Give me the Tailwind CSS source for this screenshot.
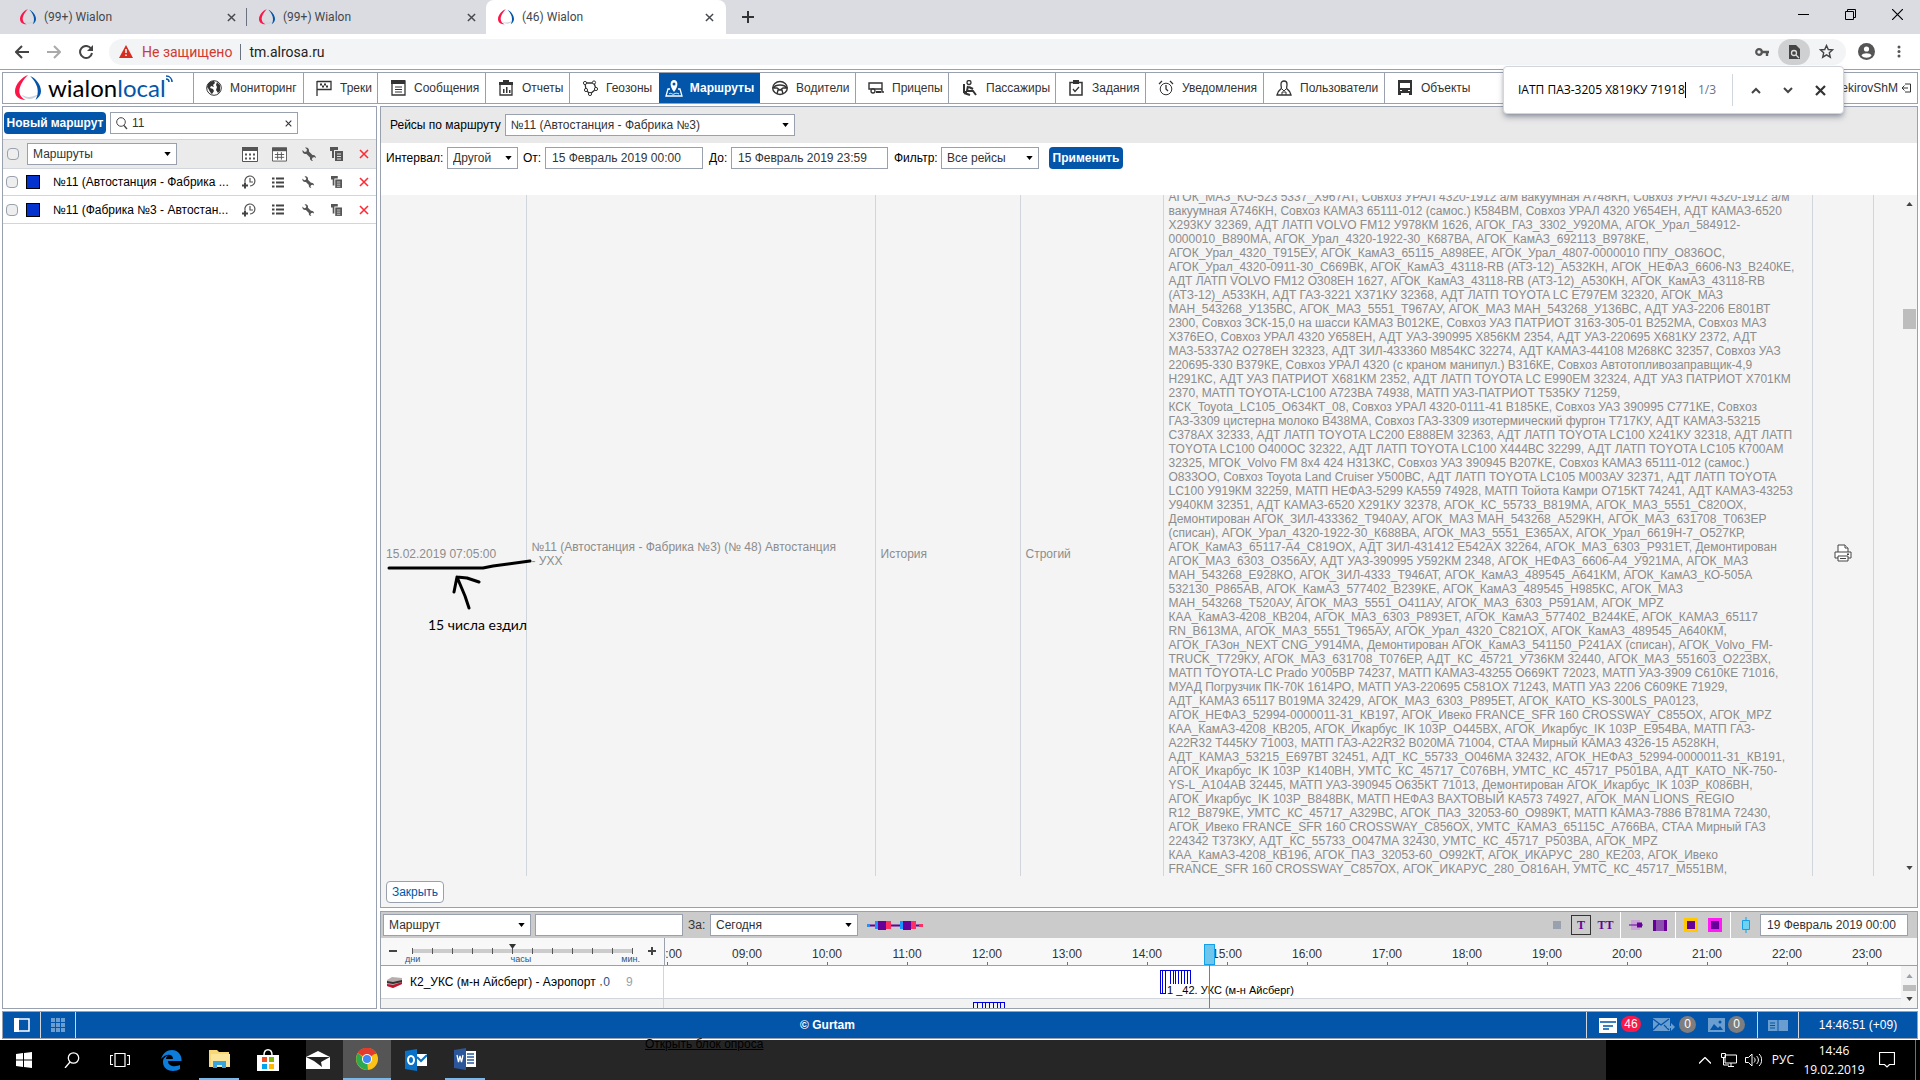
<!DOCTYPE html>
<html lang="ru">
<head>
<meta charset="utf-8">
<title>(46) Wialon</title>
<script src="https://cdn.jsdelivr.net/npm/@tailwindcss/browser@4"></script>
</head>
<body class="h-screen overflow-hidden flex flex-col bg-white font-['Liberation_Sans',Arial,sans-serif] text-xs text-[#333]">
<svg class="hidden">
  <symbol id="logo" viewBox="0 0 24 24"><path d="M12 0C6 2 0 9 0 15c0 5 4 8 10 8-3-1-6-4-6-8C4 10 8 4 12 0z" fill="#fc1648"/><path d="M14 1c5 2 10 8 10 14 0 3-2 6-5 8 1-2 2-5 2-8 0-5-3-10-7-14z" fill="#0255a9"/><path d="M6 18c4 3 9 3 15 0-3 5-11 6-15 0z" fill="#c9d3de"/></symbol>
  <symbol id="caret" viewBox="0 0 8 5"><path d="M0 0h8L4 5z" fill="currentColor"/></symbol>
  <symbol id="xs" viewBox="0 0 10 10"><path d="M1 1l8 8M9 1L1 9" stroke="currentColor" stroke-width="1.6" fill="none"/></symbol>
  <symbol id="wrench" viewBox="0 0 14 14"><path d="M3 .5L5 2.500 4.500 4.500 2.500 5 .5 3C0 6 2 7.500 4.500 7L8 10.500C7.500 12.500 9 14 11 14L9.800 12.500l.7-1.700 1.700-.7L14 11c0-2-1.500-3.500-3.500-3L7 4.500C7.500 2 6 0 3 .5z" fill="#555"/></symbol>
  <symbol id="copy" viewBox="0 0 13 14"><path d="M0 0h8v3H4v8H2V4H0z" fill="#555"/><path d="M5 4h8v10H5z" fill="#555"/><path d="M7 7h4M7 9.500h4M7 12h4" stroke="#ddd"/></symbol>
  <symbol id="list" viewBox="0 0 12 11"><path d="M0 1.500h2.500M4 1.500h8M0 5.500h2.500M4 5.500h8M0 9.500h2.500M4 9.500h8" stroke="#444" stroke-width="2"/></symbol>
  <symbol id="addtime" viewBox="0 0 14 14"><path d="M3 7a5 5 0 1 1 5 4M8 3v4h3" fill="none" stroke="#555" stroke-width="1.200"/><path d="M0 10.500h6M3 7.500v6" stroke="#444" stroke-width="2"/></symbol>
</svg>

<!-- browser tabs -->
<header class="h-[34px] shrink-0 bg-[#dadce1] flex text-[#44474c] font-[Roboto,sans-serif]">
  <div class="w-[247px] my-2 flex items-center pl-5 pr-[10px] gap-2 border-r border-gray-500"><svg class="size-4"><use href="#logo"/></svg><span class="flex-1">(99+) Wialon</span><button aria-label="Закрыть вкладку"><svg class="size-[9px]"><use href="#xs"/></svg></button></div>
  <div class="w-[239px] flex items-center pl-3 pr-[10px] gap-2"><svg class="size-4"><use href="#logo"/></svg><span class="flex-1">(99+) Wialon</span><button aria-label="Закрыть вкладку"><svg class="size-[9px]"><use href="#xs"/></svg></button></div>
  <div class="w-[240px] flex items-center px-3 gap-2 bg-white rounded-t-lg"><svg class="size-4"><use href="#logo"/></svg><span class="flex-1">(46) Wialon</span><button aria-label="Закрыть вкладку"><svg class="size-[9px]"><use href="#xs"/></svg></button></div>
  <button class="ml-4 self-center" aria-label="Новая вкладка"><svg class="size-3" viewBox="0 0 12 12"><path d="M6 0v12M0 6h12" stroke="#333" stroke-width="2"/></svg></button>
  <div class="ml-auto flex items-start gap-[36px] pt-[9px] pr-[17px]">
    <button aria-label="Свернуть"><svg class="size-[11px]" viewBox="0 0 11 11"><path d="M0 5.500h11" stroke="#000"/></svg></button>
    <button aria-label="Окно"><svg class="size-[11px]" viewBox="0 0 11 11"><path d="M.5 2.500h8v8h-8zM2.500 2.500v-2h8v8h-2" stroke="#000" fill="none"/></svg></button>
    <button aria-label="Закрыть"><svg class="size-[11px]" viewBox="0 0 11 11"><path d="M0 0l11 11M11 0L0 11" stroke="#000" stroke-width="1.200"/></svg></button>
  </div>
</header>

<!-- address bar -->
<div class="h-9 shrink-0 bg-white flex items-center pl-[15px] pr-4 font-[Roboto,sans-serif] border-b border-gray-400">
  <button aria-label="Назад"><svg class="size-[14px]" viewBox="0 0 14 14"><path d="M14 7H1M7 1L1 7l6 6" stroke="#444" stroke-width="2" fill="none"/></svg></button>
  <button class="ml-[18px]" aria-label="Вперёд"><svg class="size-[14px]" viewBox="0 0 14 14"><path d="M0 7h13M7 1l6 6-6 6" stroke="#aaa" stroke-width="2" fill="none"/></svg></button>
  <button class="ml-[18px]" aria-label="Обновить"><svg class="size-[14px]" viewBox="0 0 14 14"><path d="M12 3.500A6 6 0 1 0 13 8" stroke="#444" stroke-width="2" fill="none"/><path d="M14 0v6H8z" fill="#444"/></svg></button>
  <div class="ml-4 flex-1 h-[26px] rounded-full bg-[#f3f4f5] flex items-center pl-[10px] pr-3 text-sm">
    <svg class="w-[14px] h-[13px]" viewBox="0 0 14 13"><path d="M7 0l7 13H0z" fill="#d62d20"/><path d="M7 4v4M7 9.500v1.500" stroke="#fff" stroke-width="1.500"/></svg>
    <span class="ml-[9px] text-[#d03a30]">Не защищено</span><span class="mx-2 h-4 w-px bg-gray-500"></span><span class="text-[#222]">tm.alrosa.ru</span>
    <svg class="ml-auto w-[14px] h-2" viewBox="0 0 14 8"><circle cx="4" cy="4" r="2.800" fill="none" stroke="#555" stroke-width="2.200"/><path d="M7 4h7M12 4v4" stroke="#555" stroke-width="2.400"/></svg>
    <span class="ml-[9px] w-8 h-[26px] rounded-full bg-[#cfd0d1] flex items-center justify-center"><svg class="w-3 h-[14px]" viewBox="0 0 12 14"><path d="M1 0h7l4 4v10H1z" fill="#444"/><circle cx="6" cy="8" r="2.500" fill="none" stroke="#ddd" stroke-width="1.300"/><path d="M8 10l3 3" stroke="#ddd" stroke-width="1.300"/></svg></span>
    <svg class="ml-[9px] size-[15px]" viewBox="0 0 15 15"><path d="M7.500 1.500l1.800 4 4.200.4-3.200 2.900 1 4.400-3.800-2.400-3.800 2.400 1-4.400L1.500 5.900l4.200-.4z" fill="none" stroke="#444" stroke-width="1.400"/></svg>
  </div>
  <svg class="ml-3 size-[17px]" viewBox="0 0 17 17"><circle cx="8.500" cy="8.500" r="8.500" fill="#555"/><circle cx="8.500" cy="6" r="2.600" fill="#fff"/><path d="M3.500 12.500c1-3 9-3 10 0-2 3-8 3-10 0z" fill="#fff"/></svg>
  <svg class="ml-[22px] mr-[3px] w-1 h-[13px]" viewBox="0 0 4 13"><g fill="#555"><circle cx="2" cy="2" r="1.500"/><circle cx="2" cy="6.500" r="1.500"/><circle cx="2" cy="11" r="1.500"/></g></svg>
</div>

<!-- application menu -->
<nav class="mt-[2px] mx-[2px] h-8 shrink-0 border border-gray-400 bg-white flex relative">
  <a href="#" class="w-[191px] flex items-center pl-3 border-r border-gray-400 text-black"><svg class="size-[26px]"><use href="#logo"/></svg><span class="ml-[7px] text-2xl leading-7 font-[Lato,sans-serif]">wialon<span class="text-[#0255a9]">local</span></span><svg class="w-[7px] h-2 mb-[18px]" viewBox="0 0 7 8"><path d="M0 1c4 0 6 3 6 6M0 4c2 0 3 1 3 3" stroke="#0255a9" stroke-width="1.500" fill="none"/></svg></a>
  <a href="#" class="w-[110px] flex items-center pl-3 gap-2 border-r border-gray-400"><svg class="size-4" viewBox="0 0 16 16"><circle cx="8" cy="8" r="7.300" fill="none" stroke="#333"/><path d="M2 4c2-3 5-3 6-3l1 2-2 2 1 2-3-1-1 2 3 1 1 2-2 3C4 13 3 9 1 7zM11 2l3 3v6l-2 2-2-3 1-3-1-2z" fill="#333"/></svg>Мониторинг</a>
  <a href="#" class="w-[74px] flex items-center pl-3 gap-2 border-r border-gray-400"><svg class="size-4" viewBox="0 0 16 16"><path d="M1 1v15M1 1.500h14v8H1" fill="none" stroke="#333" stroke-width="1.300"/><path d="M4 3.500h2v2h2v-2h2v2h2v2h-2v-2H8v2H6v-2H4z" fill="#333"/></svg>Треки</a>
  <a href="#" class="w-[108px] flex items-center pl-3 gap-2 border-r border-gray-400"><svg class="size-4" viewBox="0 0 16 16"><path d="M2 1h13v14H2z" fill="none" stroke="#333" stroke-width="1.300"/><path d="M1 0h14v4H1z" fill="#333"/><path d="M5 7h7M5 9.500h7M5 12h7" stroke="#333"/></svg>Сообщения</a>
  <a href="#" class="w-[84px] flex items-center pl-3 gap-2 border-r border-gray-400"><svg class="size-4" viewBox="0 0 16 16"><path d="M2 3h12v12H2z" fill="none" stroke="#333" stroke-width="1.300"/><path d="M1 2h4V0h6v2h4v3H1zM5 9h1.500v4H5zM8 7h1.500v6H8zM11 10h1.500v3H11z" fill="#333"/></svg>Отчеты</a>
  <a href="#" class="w-[89px] flex items-center pl-3 gap-2"><svg class="size-4" viewBox="0 0 16 16"><path d="M3 3h9l2 6-6 5-4-4z" fill="none" stroke="#333" stroke-width="1.300"/><g fill="#fff" stroke="#333"><circle cx="3" cy="3" r="1.600"/><circle cx="12" cy="2.500" r="1.600"/><circle cx="14" cy="9" r="1.600"/><circle cx="8" cy="14" r="1.600"/><circle cx="4" cy="10" r="1.600"/></g></svg>Геозоны</a>
  <a href="#" class="w-[101px] flex items-center justify-center gap-[7px] bg-[#0255a9] text-white font-bold"><svg class="w-[18px] h-[17px]" viewBox="0 0 18 17"><path d="M5 9H3L1 16h16l-2-7h-2" fill="none" stroke="#fff" stroke-width="1.300"/><path d="M9 12C4 6 5 0 9 0s5 6 0 12z" fill="#fff"/><circle cx="9" cy="4" r="1.500" fill="#0255a9"/><path d="M4 14c2-2 3 1 5 0s3-1 5 0" stroke="#fff" fill="none"/></svg>Маршруты</a>
  <a href="#" class="w-[96px] flex items-center pl-3 gap-2 border-r border-gray-400"><svg class="size-4" viewBox="0 0 16 16"><ellipse cx="8" cy="8" rx="7.300" ry="6.500" fill="none" stroke="#333" stroke-width="1.400"/><path d="M1 8c3-4 11-4 14 0M1 8h4l3 2 3-2h4M5 14l1-4h4l1 4" fill="none" stroke="#333" stroke-width="1.400"/></svg>Водители</a>
  <a href="#" class="w-[93px] flex items-center pl-3 gap-2 border-r border-gray-400"><svg class="size-4" viewBox="0 0 16 16"><path d="M1 3h13v6H1zM14 9v3h2" fill="none" stroke="#333" stroke-width="1.400"/><circle cx="5" cy="11" r="2" fill="#fff" stroke="#333" stroke-width="1.300"/><path d="M8 11h5v2H8z" fill="#333"/></svg>Прицепы</a>
  <a href="#" class="w-[107px] flex items-center pl-[13px] gap-2 border-r border-gray-400"><svg class="size-4" viewBox="0 0 16 16"><circle cx="7" cy="2.500" r="2" fill="none" stroke="#333" stroke-width="1.300"/><path d="M2 4v8h3M6 6l-1 5h6l3 4M7 7l4 2M2 13l6 2" fill="none" stroke="#333" stroke-width="2"/></svg>Пассажиры</a>
  <a href="#" class="w-[90px] flex items-center pl-3 gap-2 border-r border-gray-400"><svg class="size-4" viewBox="0 0 16 16"><path d="M2 2.500h12v12.500H2z" fill="none" stroke="#333" stroke-width="1.500"/><path d="M5 0h6v4H5z" fill="#333"/><path d="M5 9l2 2.500L11 7" fill="none" stroke="#333" stroke-width="1.300"/></svg>Задания</a>
  <a href="#" class="w-[118px] flex items-center pl-3 gap-2 border-r border-gray-400"><svg class="size-4" viewBox="0 0 16 16"><circle cx="8" cy="9" r="5.800" fill="none" stroke="#333"/><path d="M8 5v4l2 2M1 4l3-3M15 4l-3-3" fill="none" stroke="#333" stroke-width="1.300"/></svg>Уведомления</a>
  <a href="#" class="w-[121px] flex items-center pl-3 gap-2 border-r border-gray-400"><svg class="size-4" viewBox="0 0 16 16"><path d="M5 4c0-4 6-4 6 0s-1 4 0 5 3 1 4 6H1c1-5 3-5 4-6s0-1 0-5z" fill="none" stroke="#333" stroke-width="1.300"/><path d="M6 9l2 2 2-2M6 15v-3h4v3" stroke="#333" fill="none"/></svg>Пользователи</a>
  <a href="#" class="flex items-center pl-3 gap-2"><svg class="w-4 h-4" viewBox="0 0 16 16"><path d="M1 0h14v15h-3v-2H4v2H1z" fill="#333"/><path d="M3 3h10v5H3z" fill="#fff"/><path d="M3 10h2v1H3zM11 10h2v1h-2z" fill="#fff"/></svg>Объекты</a>
  <a href="#" class="ml-auto flex items-center gap-1 pr-[6px]">ekirovShM<svg class="w-[9px] h-[10px]" viewBox="0 0 9 10"><path d="M3 1h5.500v8H3M6 5H0M2.500 2.500L0 5l2.500 2.500" fill="none" stroke="#333"/></svg></a>
</nav>

<!-- find in page -->
<form class="absolute right-[76px] top-[66px] w-[341px] h-12 bg-white rounded-sm border border-gray-300 shadow-md shadow-gray-500/60 flex items-center font-['Open_Sans',sans-serif]">
  <input aria-label="Найти на странице" class="ml-[14px] w-[167px] outline-none text-black" value="IАТП ПАЗ-3205 Х819КУ 71918"><span class="w-px h-4 bg-black"></span>
  <span class="ml-3 text-gray-500">1/3</span><span class="ml-4 h-8 w-px bg-gray-300"></span>
  <button type="button" aria-label="Предыдущее" class="ml-[18px]"><svg class="w-[10px] h-[7px]" viewBox="0 0 10 7"><path d="M1 6l4-4 4 4" stroke="#444" stroke-width="2" fill="none"/></svg></button>
  <button type="button" aria-label="Следующее" class="ml-[22px]"><svg class="w-[10px] h-[7px]" viewBox="0 0 10 7"><path d="M1 1l4 4 4-4" stroke="#444" stroke-width="2" fill="none"/></svg></button>
  <button type="button" aria-label="Закрыть поиск" class="ml-[22px]"><svg class="size-[11px]" viewBox="0 0 11 11"><path d="M1 1l9 9M10 1l-9 9" stroke="#333" stroke-width="2.200"/></svg></button>
</form>

<div class="flex-1 min-h-0 flex gap-[3px] px-[2px] pt-[2px]">
  <!-- routes list -->
  <aside class="w-[375px] shrink-0 border border-gray-400 bg-white flex flex-col">
    <div class="h-8 flex items-center pl-px gap-1">
      <button class="w-[102px] h-[22px] bg-[#0255a9] text-white font-bold rounded">Новый маршрут</button>
      <div class="w-[188px] h-[22px] border border-gray-400 flex items-center px-1 gap-1">
        <svg class="size-[13px]" viewBox="0 0 13 13"><circle cx="6" cy="5" r="4.300" fill="none" stroke="#444"/><path d="M9 8.500L12 12" stroke="#444" stroke-width="1.300"/></svg>
        <input aria-label="Поиск маршрута" class="flex-1 min-w-0 outline-none" value="11"><button aria-label="Очистить"><svg class="size-[7px] mr-px"><use href="#xs" /></svg></button>
      </div>
    </div>
    <div class="h-[30px] border-y border-gray-300 bg-[#ebebeb] flex items-center pl-1 pr-[7px]">
      <input type="checkbox" aria-label="Выбрать все" class="appearance-none size-3 border border-gray-400 rounded-sm bg-[#eee]">
      <div class="relative ml-2"><select aria-label="Показать" class="appearance-none w-[150px] h-[22px] pl-[5px] bg-white border border-gray-400"><option>Маршруты</option></select><svg class="absolute right-[6px] top-[9px] w-[7px] h-1 text-black"><use href="#caret"/></svg></div>
      <button class="ml-auto" aria-label="Расписание"><svg class="w-4 h-[15px]" viewBox="0 0 16 15"><path d="M.5.5h15v14H.5z" fill="#fff" stroke="#555"/><path d="M0 0h16v4H0z" fill="#555"/><path d="M3 7.500h10M3 11.500h10" stroke="#555" stroke-width="2" stroke-dasharray="2 2"/></svg></button>
      <button class="ml-[14px]" aria-label="Таблица"><svg class="w-[15px] h-[15px]" viewBox="0 0 16 15"><path d="M.5.5h15v14H.5z" fill="#fff" stroke="#555"/><path d="M0 0h16v4H0z" fill="#555"/><path d="M3 7.500h10M3 10.500h10M6 5v8M10 5v8" stroke="#555"/></svg></button>
      <button class="ml-[15px]" aria-label="Свойства"><svg class="size-[14px]"><use href="#wrench"/></svg></button>
      <button class="ml-[14px]" aria-label="Копировать"><svg class="w-[13px] h-[14px]"><use href="#copy"/></svg></button>
      <button class="ml-4 text-red-500" aria-label="Удалить"><svg class="size-[10px]"><use href="#xs"/></svg></button>
    </div>
    <div class="h-[27px] border-b border-gray-300 flex items-center pl-[3px] pr-[7px] text-black">
      <input type="checkbox" aria-label="№11 (Автостанция - Фабрика №3)" class="appearance-none size-3 border border-gray-400 rounded-sm bg-[#eee]"><span class="ml-2 size-[14px] bg-[#0432ce] border border-black"></span><span class="ml-[13px] w-[178px] whitespace-nowrap">№11 (Автостанция - Фабрика ...</span>
      <button class="ml-auto" aria-label="Добавить рейс"><svg class="size-[14px]"><use href="#addtime"/></svg></button><button class="ml-4" aria-label="Рейсы"><svg class="w-3 h-[11px]"><use href="#list"/></svg></button><button class="ml-[18px]" aria-label="Свойства"><svg class="size-3"><use href="#wrench"/></svg></button><button class="ml-[17px]" aria-label="Копировать"><svg class="w-[11px] h-3"><use href="#copy"/></svg></button><button class="ml-[17px] text-red-500" aria-label="Удалить"><svg class="size-[10px]"><use href="#xs"/></svg></button>
    </div>
    <div class="h-[28px] border-b border-gray-300 flex items-center pl-[3px] pr-[7px] text-black">
      <input type="checkbox" aria-label="№11 (Фабрика №3 - Автостанция)" class="appearance-none size-3 border border-gray-400 rounded-sm bg-[#eee]"><span class="ml-2 size-[14px] bg-[#0432ce] border border-black"></span><span class="ml-[13px] w-[178px] whitespace-nowrap">№11 (Фабрика №3 - Автостан...</span>
      <button class="ml-auto" aria-label="Добавить рейс"><svg class="size-[14px]"><use href="#addtime"/></svg></button><button class="ml-4" aria-label="Рейсы"><svg class="w-3 h-[11px]"><use href="#list"/></svg></button><button class="ml-[18px]" aria-label="Свойства"><svg class="size-3"><use href="#wrench"/></svg></button><button class="ml-[17px]" aria-label="Копировать"><svg class="w-[11px] h-3"><use href="#copy"/></svg></button><button class="ml-[17px] text-red-500" aria-label="Удалить"><svg class="size-[10px]"><use href="#xs"/></svg></button>
    </div>
  </aside>

  <div class="flex-1 min-w-0 flex flex-col gap-[3px]">
    <!-- rides of the route -->
    <main class="flex-1 min-h-0 border border-gray-400 bg-white flex flex-col">
      <div class="h-9 shrink-0 bg-[#e9e9e9] flex items-center pl-[9px] gap-1 text-black">
        <label for="route">Рейсы по маршруту</label>
        <div class="relative"><select id="route" class="appearance-none w-[290px] h-[22px] pl-[5px] bg-white border border-gray-400 text-[#333]"><option>№11 (Автостанция - Фабрика №3)</option></select><svg class="absolute right-[6px] top-[9px] w-[7px] h-1"><use href="#caret"/></svg></div>
      </div>
      <div class="h-[52px] shrink-0 flex items-start pt-1 pl-[5px] text-black">
        <div class="flex items-center h-[22px]">
        <label for="interval" class="w-[61px]">Интервал:</label>
        <div class="relative"><select id="interval" class="appearance-none w-[71px] h-[22px] pl-[5px] bg-white border border-gray-400 text-[#333]"><option>Другой</option></select><svg class="absolute right-[6px] top-[9px] w-[7px] h-1"><use href="#caret"/></svg></div>
        <label for="from" class="ml-[5px] w-[22px]">От:</label><input id="from" class="w-[158px] h-[22px] px-[6px] border border-gray-400 text-[#333]" value="15 Февраль 2019 00:00">
        <label for="to" class="ml-[6px] w-[22px]">До:</label><input id="to" class="w-[157px] h-[22px] px-[6px] border border-gray-400 text-[#333]" value="15 Февраль 2019 23:59">
        <label for="filter" class="ml-[6px] w-[47px]">Фильтр:</label>
        <div class="relative"><select id="filter" class="appearance-none w-[98px] h-[22px] pl-[5px] bg-white border border-gray-400 text-[#333]"><option>Все рейсы</option></select><svg class="absolute right-[6px] top-[9px] w-[7px] h-1"><use href="#caret"/></svg></div>
        <button class="ml-[10px] w-[74px] h-[22px] bg-[#0255a9] text-white font-bold rounded">Применить</button>
        </div>
      </div>
      <div class="relative flex-1 min-h-0 flex bg-[#f4f4f4]">
        <div class="flex-1 min-w-0 overflow-hidden">
        <table class="-mt-[5px] w-full table-fixed text-[#8c8c8c] leading-[14px] text-left">
          <colgroup><col class="w-[145px]"><col class="w-[349px]"><col class="w-[145px]"><col class="w-[143px]"><col><col class="w-[61px]"><col class="w-[28px]"></colgroup>
          <tbody><tr>
            <td class="border-r border-gray-300 pl-[5px]">15.02.2019 07:05:00</td>
            <td class="border-r border-gray-300 pl-[5px] whitespace-nowrap">№11 (Автостанция - Фабрика №3) (№ 48) Автостанция<br>- УХХ</td>
            <td class="border-r border-gray-300 pl-[5px]">История</td>
            <td class="border-r border-gray-300 pl-[5px]">Строгий</td>
            <td class="border-r border-gray-300 pl-[5px] pb-[42px] whitespace-nowrap">АГОК_МАЗ_КО-523 5337_Х967АТ, Совхоз УРАЛ 4320-1912 а/м вакуумная А748КН, Совхоз УРАЛ 4320-1912 а/м<br>вакуумная А746КН, Совхоз КАМАЗ 65111-012 (самос.) К584ВМ, Совхоз УРАЛ 4320 У654ЕН, АДТ КАМАЗ-6520<br>Х293КУ 32369, АДТ ЛАТП VOLVO FM12 У978КМ 1626, АГОК_ГАЗ_3302_У920МА, АГОК_Урал_584912-<br>0000010_В890МА, АГОК_Урал_4320-1922-30_К687ВА, АГОК_КамАЗ_692113_В978КЕ,<br>АГОК_Урал_4320_Т915ЕУ, АГОК_КамАЗ_65115_А898ЕЕ, АГОК_Урал_4807-0000010 ППУ_О836ОС,<br>АГОК_Урал_4320-0911-30_С669ВК, АГОК_КамАЗ_43118-RB (АТЗ-12)_А532КН, АГОК_НЕФАЗ_6606-N3_В240КЕ,<br>АДТ ЛАТП VOLVO FM12 О308ЕН 1627, АГОК_КамАЗ_43118-RB (АТЗ-12)_А530КН, АГОК_КамАЗ_43118-RB<br>(АТЗ-12)_А533КН, АДТ ГАЗ-3221 Х371КУ 32368, АДТ ЛАТП TOYOTA LC Е797ЕМ 32320, АГОК_МАЗ<br>МАН_543268_У135ВС, АГОК_МАЗ_5551_Т967АУ, АГОК_МАЗ МАН_543268_У136ВС, АДТ УАЗ-2206 Е801ВТ<br>2300, Совхоз ЗСК-15,0 на шасси КАМАЗ В012КЕ, Совхоз УАЗ ПАТРИОТ 3163-305-01 В252МА, Совхоз МАЗ<br>Х376ЕО, Совхоз УРАЛ 4320 У658ЕН, АДТ УАЗ-390995 Х856КМ 2354, АДТ УАЗ-220695 Х681КУ 2372, АДТ<br>МАЗ-5337А2 О278ЕН 32323, АДТ ЗИЛ-433360 М854КС 32274, АДТ КАМАЗ-44108 М268КС 32357, Совхоз УАЗ<br>220695-330 В379КЕ, Совхоз УРАЛ 4320 (с краном манипул.) В316КЕ, Совхоз Автотопливозаправщик-4,9<br>Н291КС, АДТ УАЗ ПАТРИОТ Х681КМ 2352, АДТ ЛАТП TOYOTA LC Е990ЕМ 32324, АДТ УАЗ ПАТРИОТ Х701КМ<br>2370, МАТП TOYOTA-LC100 А723ВА 74938, МАТП УАЗ-ПАТРИОТ Т535КУ 71259,<br>КСК_Toyota_LC105_О634КТ_08, Совхоз УРАЛ 4320-0111-41 В185КЕ, Совхоз УАЗ 390995 С771КЕ, Совхоз<br>ГАЗ-3309 цистерна молоко В438МА, Совхоз ГАЗ-3309 изотермический фургон Т717КУ, АДТ КАМАЗ-53215<br>С378АХ 32333, АДТ ЛАТП TOYOTA LC200 Е888ЕМ 32363, АДТ ЛАТП TOYOTA LC100 Х241КУ 32318, АДТ ЛАТП<br>TOYOTA LC100 О400ОС 32322, АДТ ЛАТП TOYOTA LC100 Х444ВС 32299, АДТ ЛАТП TOYOTA LC105 К700АМ<br>32325, МГОК_Volvo FM 8x4 424 Н313КС, Совхоз УАЗ 390945 В207КЕ, Совхоз КАМАЗ 65111-012 (самос.)<br>О833ОО, Совхоз Toyota Land Cruiser У500ВС, АДТ ЛАТП TOYOTA LC105 М003АУ 32371, АДТ ЛАТП TOYOTA<br>LC100 У919КМ 32259, МАТП НЕФАЗ-5299 КА559 74928, МАТП Тойота Камри О715КТ 74241, АДТ КАМАЗ-43253<br>У940КМ 32351, АДТ КАМАЗ-6520 Х291КУ 32378, АГОК_КС_55733_В819МА, АГОК_МАЗ_5551_С820ОХ,<br>Демонтирован АГОК_ЗИЛ-433362_Т940АУ, АГОК_МАЗ МАН_543268_А529КН, АГОК_МАЗ_631708_Т063ЕР<br>(списан), АГОК_Урал_4320-1922-30_К688ВА, АГОК_МАЗ_5551_Е365АХ, АГОК_Урал_6619Н-7_О527КР,<br>АГОК_КамАЗ_65117-А4_С819ОХ, АДТ ЗИЛ-431412 Е542АХ 32264, АГОК_МАЗ_6303_Р931ЕТ, Демонтирован<br>АГОК_МАЗ_6303_О356АУ, АДТ УАЗ-390995 У592КМ 2348, АГОК_НЕФАЗ_6606-А4_У921МА, АГОК_МАЗ<br>МАН_543268_Е928КО, АГОК_ЗИЛ-4333_Т946АТ, АГОК_КамАЗ_489545_А641КМ, АГОК_КамАЗ_КО-505А<br>532130_Р865АВ, АГОК_КамАЗ_577402_В239КЕ, АГОК_КамАЗ_489545_Н985КС, АГОК_МАЗ<br>МАН_543268_Т520АУ, АГОК_МАЗ_5551_О411АУ, АГОК_МАЗ_6303_Р591АМ, АГОК_MPZ<br>КАА_КамАЗ-4208_КВ204, АГОК_МАЗ_6303_Р893ЕТ, АГОК_КамАЗ_577402_В244КЕ, АГОК_КАМАЗ_65117<br>RN_В613МА, АГОК_МАЗ_5551_Т965АУ, АГОК_Урал_4320_С821ОХ, АГОК_КамАЗ_489545_А640КМ,<br>АГОК_ГАЗон_NEXT CNG_У914МА, Демонтирован АГОК_КамАЗ_541150_Р241АХ (списан), АГОК_Volvo_FM-<br>TRUCK_Т729КУ, АГОК_МАЗ_631708_Т076ЕР, АДТ_КС_45721_У736КМ 32440, АГОК_МАЗ_551603_О223ВХ,<br>МАТП TOYOTA-LC Prado У005ВР 74237, МАТП КАМАЗ-43255 О669КТ 72023, МАТП УАЗ-3909 С610КЕ 71016,<br>МУАД Погрузчик ПК-70К 1614РО, МАТП УАЗ-220695 С581ОХ 71243, МАТП УАЗ 2206 С609КЕ 71929,<br>АДТ_КАМАЗ 65117 В019МА 32429, АГОК_МАЗ_6303_Р895ЕТ, АГОК_КАТО_KS-300LS_РА0123,<br>АГОК_НЕФАЗ_52994-0000011-31_КВ197, АГОК_Ивеко FRANCE_SFR 160 CROSSWAY_С855ОХ, АГОК_MPZ<br>КАА_КамАЗ-4208_КВ205, АГОК_Икарбус_IK 103P_О445ВХ, АГОК_Икарбус_IK 103P_Е954ВА, МАТП ГАЗ-<br>А22R32 Т445КУ 71003, МАТП ГАЗ-А22R32 В020МА 71004, СТАА Мирный КАМАЗ 4326-15 А528КН,<br>АДТ_КАМАЗ_53215_Е697ВТ 32451, АДТ_КС_55733_О046МА 32432, АГОК_НЕФАЗ_52994-0000011-31_КВ191,<br>АГОК_Икарбус_IK 103P_К140ВН, УМТС_КС_45717_С076ВН, УМТС_КС_45717_Р501ВА, АДТ_КАТО_NK-750-<br>YS-L_А104АВ 32445, МАТП УАЗ-390945 О635КТ 71013, Демонтирован АГОК_Икарбус_IK 103P_К086ВН,<br>АГОК_Икарбус_IK 103P_В848ВК, МАТП НЕФАЗ ВАХТОВЫЙ КА573 74927, АГОК_MAN LIONS_REGIO<br>R12_В879КЕ, УМТС_КС_45717_А329ВС, АГОК_ПАЗ_32053-60_О989КТ, МАТП КАМАЗ-7886 В781МА 72430,<br>АГОК_Ивеко FRANCE_SFR 160 CROSSWAY_С856ОХ, УМТС_КАМАЗ_65115С_А766ВА, СТАА Мирный ГАЗ<br>224342 Т373КУ, АДТ_КС_55733_О047МА 32430, УМТС_КС_45717_Р503ВА, АГОК_MPZ<br>КАА_КамАЗ-4208_КВ196, АГОК_ПАЗ_32053-60_О992КТ, АГОК_ИКАРУС_280_КЕ203, АГОК_Ивеко<br>FRANCE_SFR 160 CROSSWAY_С857ОХ, АГОК_ИКАРУС_280_О816АН, УМТС_КС_45717_М551ВМ,</td>
            <td class="border-r border-gray-300 pl-[21px]"><button aria-label="Печать"><svg class="w-[18px] h-[18px]" viewBox="0 0 18 18"><path d="M4 8V1h7l3 3v4M4 14H1V8h16v6h-3" fill="#fff" stroke="#444"/><path d="M4 12h10v5H4zM11 1v3h3M6 14.500h6" fill="#fff" stroke="#444"/><path d="M13 9.500h2v1.500h-2z" fill="#444"/></svg></button></td>
            <td></td>
          </tr></tbody>
        </table>
        </div>
        <div class="w-4 flex flex-col items-center pt-[7px] pb-[6px] text-[#444]">
          <svg class="w-[7px] h-1 rotate-180"><use href="#caret"/></svg><span class="mt-[103px] w-[13px] h-5 bg-[#bdbdbd]"></span><svg class="mt-auto w-[7px] h-1"><use href="#caret"/></svg>
        </div>
        <!-- pen notes over the table -->
        <svg class="absolute left-[6px] top-[358px] w-[148px] h-[60px]" viewBox="0 0 148 60" fill="none" stroke="#000" stroke-width="3" stroke-linecap="round" stroke-linejoin="round"><path d="M2 15h94l10-2 15-2 22-3M82 55l-4-12-8-19-3 15M70 24l10 1 12 4"/></svg>
        <span class="absolute left-[47px] top-[422px] text-sm leading-4 text-black font-[Lato,sans-serif]">15 числа ездил</span>
      </div>
      <div class="h-[31px] shrink-0 bg-[#f4f4f4] pl-[5px] pt-[5px]"><button class="w-[58px] h-[22px] bg-white border border-gray-400 rounded text-[#0255a9]">Закрыть</button></div>
    </main>

    <!-- timeline -->
    <section class="relative h-[98px] shrink-0 border border-gray-400 bg-white flex flex-col">
      <div class="h-[26px] shrink-0 bg-[#cbcbcb] flex items-center pl-[2px] pr-[9px]">
        <div class="relative"><select aria-label="Тип" class="appearance-none w-[148px] h-[22px] pl-[5px] bg-white border border-gray-400"><option>Маршрут</option></select><svg class="absolute right-[6px] top-[9px] w-[7px] h-1 text-black"><use href="#caret"/></svg></div>
        <input aria-label="Фильтр маршрутов" class="ml-1 w-[148px] h-[22px] px-1 bg-white border border-gray-400">
        <label for="period" class="ml-[5px] w-[22px]">За:</label>
        <div class="relative"><select id="period" class="appearance-none w-[148px] h-[22px] pl-[5px] bg-white border border-gray-400"><option>Сегодня</option></select><svg class="absolute right-[6px] top-[9px] w-[7px] h-1 text-black"><use href="#caret"/></svg></div>
        <svg class="ml-[9px] w-14 h-[9px]" viewBox="0 0 56 9"><path d="M0 4.500h56" stroke="#660099" stroke-width="2"/><path d="M0 3h3v3H0zM8 0h5v8H8zM33 0h5v8h-5z" fill="#1a94ff"/><path d="M18 0h6v8h-6zM43 0h6v8h-6zM52 3h4v3h-4z" fill="#ff2e63"/><path d="M11 0h8v9h-8zM36 0h8v9h-8z" fill="#660099"/></svg>
        <div class="ml-auto flex items-center text-[#660099]">
          <span class="size-2 bg-gray-400"></span>
          <button class="ml-[10px] size-5 border border-[#333] font-bold font-['Liberation_Serif',serif]">T</button>
          <button class="ml-[6px] font-bold font-['Liberation_Serif',serif] w-[17px]">TT</button>
          <span class="ml-[6px] h-[26px] w-px bg-white"></span>
          <svg class="ml-2 w-[14px] h-3" viewBox="0 0 14 12"><path d="M2 1h9v10H2z" fill="#c9a3d8"/><path d="M0 6h14" stroke="#660099"/><path d="M8 3.500h5v5H8z" fill="#660099"/></svg>
          <svg class="ml-[10px] w-[14px] h-[11px]" viewBox="0 0 14 11"><path d="M0 0h14v11H0z" fill="#8d4fad"/><path d="M0 0h3v11H0zM11 0h3v11h-3z" fill="#660099"/></svg>
          <span class="ml-2 h-[26px] w-px bg-white"></span>
          <span class="ml-2 size-[14px] border-3 border-[#ffc800] bg-[#660099]"></span>
          <span class="ml-[10px] size-[14px] border-3 border-[#ff1af5] bg-[#660099]"></span>
          <span class="ml-2 h-[26px] w-px bg-white"></span>
          <svg class="ml-[11px] w-2 h-4" viewBox="0 0 8 16"><path d="M4 0v16" stroke="#13a0e8"/><path d="M.5 3.500h7v9h-7z" fill="#6fd2f3" stroke="#13a0e8"/></svg>
        </div>
        <input aria-label="Дата" class="ml-[10px] w-[148px] h-[22px] px-[6px] bg-white border border-gray-400" value="19 Февраль 2019 00:00">
      </div>
      <div class="h-7 shrink-0 bg-[#f8f8f8] border-b border-gray-400 flex text-[#333]">
        <div class="w-[284px] shrink-0 border-r border-gray-400 flex items-start px-2 pt-[6px] gap-2">
          <button aria-label="Уменьшить" class="pt-[3px]"><svg class="size-2" viewBox="0 0 8 8"><path d="M0 4h8" stroke="#444" stroke-width="2"/></svg></button>
          <div class="flex-1 min-w-0 text-[9px] leading-[9px] text-[#24568c]">
            <svg class="ml-[7px] w-[221px] h-[11px]" viewBox="0 0 221 11"><path d="M0 5h221v4H0z" fill="#ccc"/><path d="M.5 4v6M20.500 4v6M40.500 4v6M60.500 4v6M80.500 4v6M100.500 0v10M120.500 4v6M140.500 4v6M160.500 4v6M180.500 4v6M200.500 4v6M220.500 4v6" stroke="#555"/><path d="M97 0h7l-3.500 5z" fill="#333"/></svg>
            <div class="flex justify-between"><span>дни</span><span>часы</span><span>мин.</span></div>
          </div>
          <button aria-label="Увеличить" class="pt-[3px]"><svg class="size-2" viewBox="0 0 8 8"><path d="M0 4h8M4 0v8" stroke="#444" stroke-width="2"/></svg></button>
        </div>
        <div class="flex-1 min-w-0 overflow-hidden flex *:w-20 *:shrink-0 *:flex *:flex-col *:items-center *:justify-end *:leading-[15px]">
          <div class="-ml-[38px]"><span>08:00</span><i class="w-px h-[3px] bg-gray-500"></i></div>
          <div><span>09:00</span><i class="w-px h-[3px] bg-gray-500"></i></div>
          <div><span>10:00</span><i class="w-px h-[3px] bg-gray-500"></i></div>
          <div><span>11:00</span><i class="w-px h-[3px] bg-gray-500"></i></div>
          <div><span>12:00</span><i class="w-px h-[3px] bg-gray-500"></i></div>
          <div><span>13:00</span><i class="w-px h-[3px] bg-gray-500"></i></div>
          <div><span>14:00</span><i class="w-px h-[3px] bg-gray-500"></i></div>
          <div><span>15:00</span><i class="w-px h-[3px] bg-gray-500"></i></div>
          <div><span>16:00</span><i class="w-px h-[3px] bg-gray-500"></i></div>
          <div><span>17:00</span><i class="w-px h-[3px] bg-gray-500"></i></div>
          <div><span>18:00</span><i class="w-px h-[3px] bg-gray-500"></i></div>
          <div><span>19:00</span><i class="w-px h-[3px] bg-gray-500"></i></div>
          <div><span>20:00</span><i class="w-px h-[3px] bg-gray-500"></i></div>
          <div><span>21:00</span><i class="w-px h-[3px] bg-gray-500"></i></div>
          <div><span>22:00</span><i class="w-px h-[3px] bg-gray-500"></i></div>
          <div><span>23:00</span><i class="w-px h-[3px] bg-gray-500"></i></div>
        </div>
      </div>
      <div class="flex-1 min-h-0 flex">
        <div class="w-[283px] shrink-0 border-r border-gray-300 flex flex-col">
          <div class="h-[33px] border-b border-gray-300 flex items-center pl-[5px] text-black"><svg class="w-[17px] h-[11px]" viewBox="0 0 17 11"><path d="M1 3l5-3 10 1v6l-9 4-6-2z" fill="#b9aeae"/><path d="M1 4l6 1 9-2v2L7 7 1 6z" fill="#333"/><path d="M1 7l6 1 9-3v2l-9 4-6-2z" fill="#c5122c"/></svg><span class="ml-[7px]">К2_УКС (м-н Айсберг) - Аэропорт</span><span class="ml-1 text-[9px]">,</span><span class="ml-px text-[#24568c]">0</span><span class="ml-4 text-gray-400">9</span></div>
          <div class="flex-1 bg-[#f2f2f2]"></div>
        </div>
        <div class="flex-1 min-w-0 flex flex-col"><div class="h-[33px] border-b border-gray-300"></div><div class="flex-1 bg-[#f2f2f2]"></div></div>
        <div class="w-4 bg-[#f4f4f4] flex flex-col items-center justify-between pt-2 pb-[7px] text-[#444]"><svg class="w-[7px] h-1 rotate-180 text-gray-400"><use href="#caret"/></svg><span class="w-[13px] h-[6px] bg-[#bdbdbd]"></span><svg class="w-[7px] h-1"><use href="#caret"/></svg></div>
      </div>
      <!-- rides and the current time on the timeline -->
      <svg class="absolute left-[779px] top-[58px] w-[31px] h-[24px]" viewBox="0 0 31 24"><path d="M0 .5h31M.5 0v24M2.500 0v24M5.500 0v23M0 23.500h6M10.500 0v14M13.500 0v14M15.500 0v14M18.500 0v14M21.500 0v14M24.500 0v14M27.500 0v14M30.500 0v14" stroke="#00d"/></svg>
      <span class="absolute left-[786px] top-[71px] text-[11px] leading-[14px] text-black">1 _42. УКС (м-н Айсберг)</span>
      <svg class="absolute left-[592px] top-[90px] w-8 h-[6px]" viewBox="0 0 32 6"><path d="M0 .5h32M.5 0v6M4.500 0v6M9.500 0v6M12.500 0v6M16.500 0v6M20.500 0v6M24.500 0v6M27.500 0v6M31.500 0v6" stroke="#00d"/></svg>
      <span class="absolute left-[828px] top-[52px] w-px h-[44px] bg-[#13a0e8]"></span>
      <span class="absolute left-[823px] top-[32px] w-[11px] h-[21px] bg-[#6ec6ec] border border-[#13a0e8]"></span>
    </section>
  </div>
</div>

<!-- status bar -->
<footer class="mt-[2px] mx-[2px] mb-px h-7 shrink-0 bg-[#0255a9] border border-gray-400 flex items-center text-white font-bold">
  <button aria-label="Панель" class="w-[38px] h-full border-r border-gray-300 flex items-center justify-center"><svg class="w-4 h-[14px]" viewBox="0 0 16 14"><path d="M1 1h14v12H1z" fill="none" stroke="#fff" stroke-width="1.500"/><path d="M0 0h5v14H0z" fill="#fff"/></svg></button>
  <button aria-label="Приложения" class="w-[35px] h-full border-r border-gray-300 flex items-center justify-center"><svg class="w-[14px] h-[14px]" viewBox="0 0 14 14"><path d="M0 2h14M0 7h14M0 12h14" stroke="#6b9ed0" stroke-width="4" stroke-dasharray="4 1"/></svg></button>
  <a href="#" class="flex-1 pr-[7px] text-center">© Gurtam</a>
  <div class="h-full border-l border-gray-300 flex items-center pl-3 font-normal">
    <svg class="w-[18px] h-[15px]" viewBox="0 0 18 15"><path d="M0 0h18v15H0z" fill="#fff"/><path d="M1 4h16M4 8h10M4 11h6" stroke="#0255a9" stroke-width="1.500"/></svg><span class="ml-1 mb-[2px] h-4 w-5 text-center leading-4 rounded-full bg-[#f8184a]">46</span>
    <svg class="ml-3 w-[22px] h-[14px]" viewBox="0 0 22 14"><path d="M0 0h17v13H0z" fill="#6b9ed0"/><path d="M0 1l8 6 8-6M0 12l6-6M16 12l-5-5" stroke="#0255a9" fill="none" stroke-width="1.300"/><path d="M14 8h4v-3l4 4-4 4v-3h-4z" fill="#6b9ed0"/></svg><span class="ml-1 mb-[2px] size-[17px] text-center leading-[17px] rounded-full bg-[#7e7e80]">0</span>
    <svg class="ml-3 w-[17px] h-[14px]" viewBox="0 0 17 14"><path d="M0 0h17v14H0z" fill="#6b9ed0"/><path d="M2 12l4-6 4 4 2-2 3 4z" fill="#0255a9"/><circle cx="12" cy="4" r="1.500" fill="#0255a9"/></svg><span class="ml-[3px] mb-[2px] size-[17px] text-center leading-[17px] rounded-full bg-[#7e7e80]">0</span>
  </div>
  <div class="ml-3 h-full w-[42px] border-x border-gray-300 flex items-center justify-center"><svg class="w-5 h-[11px]" viewBox="0 0 20 11"><path d="M0 0h9.500v11H0zM10.500 0H20v11h-9.500z" fill="#6b9ed0"/><path d="M2 3h5M2 5.500h5M2 8h5" stroke="#0255a9"/></svg></div>
  <span class="w-[118px] text-center font-normal">14:46:51 (+09)</span>
</footer>

<!-- taskbar -->
<div class="h-10 shrink-0 bg-[#262626] flex text-white font-['Open_Sans',sans-serif]">
  <div class="w-[306px] bg-black flex *:h-full *:flex *:items-center *:justify-center">
    <button aria-label="Пуск" class="w-12"><svg class="size-4" viewBox="0 0 16 16"><path d="M0 2l7-1v6.500H0zM8 1l8-1v7.500H8zM0 8.500h7V15l-7-1zM8 8.500h8V16l-8-1z" fill="#fff"/></svg></button>
    <button aria-label="Поиск" class="w-12"><svg class="size-4" viewBox="0 0 16 16"><circle cx="9.500" cy="6" r="5.200" fill="none" stroke="#fff" stroke-width="1.300"/><path d="M6 10l-5 6" stroke="#fff" stroke-width="1.300"/></svg></button>
    <button aria-label="Задачи" class="w-12"><svg class="w-5 h-[14px]" viewBox="0 0 20 14"><path d="M5 .5h10v13H5zM3 2.500H.5v9H3M17 2.500h2.500v9H17" fill="none" stroke="#fff" stroke-width="1.200"/></svg></button>
    <button aria-label="Edge" class="w-[54px]"><svg class="size-[21px]" viewBox="0 0 21 21"><path d="M0 9C2 3 6 0 11 0c6 0 10 5 9.500 11H7c0 6 8 6 12 4v4c-6 4-17 2-17-7 0-4 3-6 6-7-2 1-3 2-3 4h7c0-6-8-5-12 0z" fill="#0c7ddb"/></svg></button>
    <button aria-label="Проводник" class="w-10 ml-px border-b-2 border-[#76b9ed]"><svg class="w-[21px] h-[18px]" viewBox="0 0 21 18"><path d="M0 0h8l2 2h10v15H0z" fill="#f8d775"/><path d="M2 4h19v13H2z" fill="#fbe59a"/><path d="M4 18v-7h13v7h-4v-3H8v3z" fill="#39a5dc"/></svg></button>
    <button aria-label="Магазин" class="w-[58px]"><svg class="w-[22px] h-[22px]" viewBox="0 0 22 22"><path d="M7 6c0-7 8-7 8 0" fill="none" stroke="#fff" stroke-width="1.500"/><path d="M0 6h22v16H0z" fill="#fff"/><path d="M5 8h5v5H5z" fill="#f25022"/><path d="M12 8h5v5h-5z" fill="#7fba00"/><path d="M5 15h5v5H5z" fill="#00a4ef"/><path d="M12 15h5v5h-5z" fill="#ffb900"/></svg></button>
  </div>
  <div class="flex *:h-full *:flex *:items-center *:justify-center">
    <button aria-label="Почта" class="w-6"><svg class="w-6 h-[18px]" viewBox="0 0 24 18"><path d="M0 6l12-6 12 6v12H0z" fill="#fff"/><path d="M0 6h24l-9 5 1 5-8-6z" fill="#222"/></svg></button>
    <button aria-label="Chrome" class="w-12 ml-[13px] bg-[#555] border-b-2 border-[#76b9ed]"><svg class="size-[22px]" viewBox="0 0 22 22"><circle cx="11" cy="11" r="11" fill="#fbc116"/><path d="M11 11L2 5c4-7 14-6 18 0z" fill="#e33b2e"/><path d="M2 5l9 8 1 9C3 22-3 13 2 5z" fill="#2da94f"/><path d="M2 5C6-2 17-2 20.500 6H11z" fill="#e33b2e"/><circle cx="11" cy="11" r="5" fill="#fff"/><circle cx="11" cy="11" r="4" fill="#4285f4"/></svg></button>
    <button aria-label="Outlook" class="w-[49px]"><svg class="w-[22px] h-[22px]" viewBox="0 0 22 22"><path d="M10 5h12v12H10z" fill="#fff"/><path d="M12 8l4 4 6-6" stroke="#0a72c6" stroke-width="2" fill="none"/><path d="M0 2l12-2v22L0 20z" fill="#0a72c6"/><ellipse cx="6" cy="11" rx="3" ry="4" fill="none" stroke="#fff" stroke-width="2"/></svg></button>
    <button aria-label="Word" class="ml-[5px] w-10 border-b-2 border-[#76b9ed]"><svg class="w-[22px] h-[22px]" viewBox="0 0 22 22"><path d="M10 3h12v16H10z" fill="#fff"/><path d="M13 6h7M13 9h7M13 12h7M13 15h7" stroke="#2b579a" stroke-width="1.300"/><path d="M0 2l12-2v22L0 20z" fill="#2b579a"/><path d="M3 7l1.500 7L6 8l1.500 6L9 7" stroke="#fff" stroke-width="1.300" fill="none"/></svg></button>
  </div>
  <span class="ml-[160px] -mt-1 h-4 leading-4 text-black underline font-['Liberation_Sans',sans-serif]">Открыть блок опроса</span>
  <div class="ml-auto w-[314px] bg-black flex items-center justify-end pr-1">
    <svg class="w-3 h-[7px]" viewBox="0 0 12 7"><path d="M0 6.500l6-6 6 6" fill="none" stroke="#fff" stroke-width="1.300"/></svg>
    <svg class="ml-[10px] w-4 h-[14px]" viewBox="0 0 16 14"><path d="M4 2h11.500v8H4zM7 13.500h6M10 10v3M.5.5h4v4h-4zM2.500 5v7H8" fill="none" stroke="#fff"/></svg>
    <svg class="ml-2 w-[17px] h-[14px]" viewBox="0 0 17 14"><path d="M.5 4.500h3L7 1v12L3.500 9.500h-3zM9 4.500c1.500 1.500 1.500 3.500 0 5M11.500 3c2.500 2 2.500 6 0 8M14 1c3.500 3 3.500 9 0 12" fill="none" stroke="#fff"/></svg>
    <span class="ml-[10px]">РУС</span>
    <span class="ml-2 w-16 text-center leading-[19px]">14:46<br>19.02.2019</span>
    <svg class="ml-[13px] w-4 h-4" viewBox="0 0 16 16"><path d="M.5.5h15v12h-5L8 15l-2.500-2.500h-5z" fill="none" stroke="#fff" stroke-width="1.200"/></svg>
    <span class="ml-5 w-px h-full bg-gray-500"></span>
  </div>
</div>
</body>
</html>
